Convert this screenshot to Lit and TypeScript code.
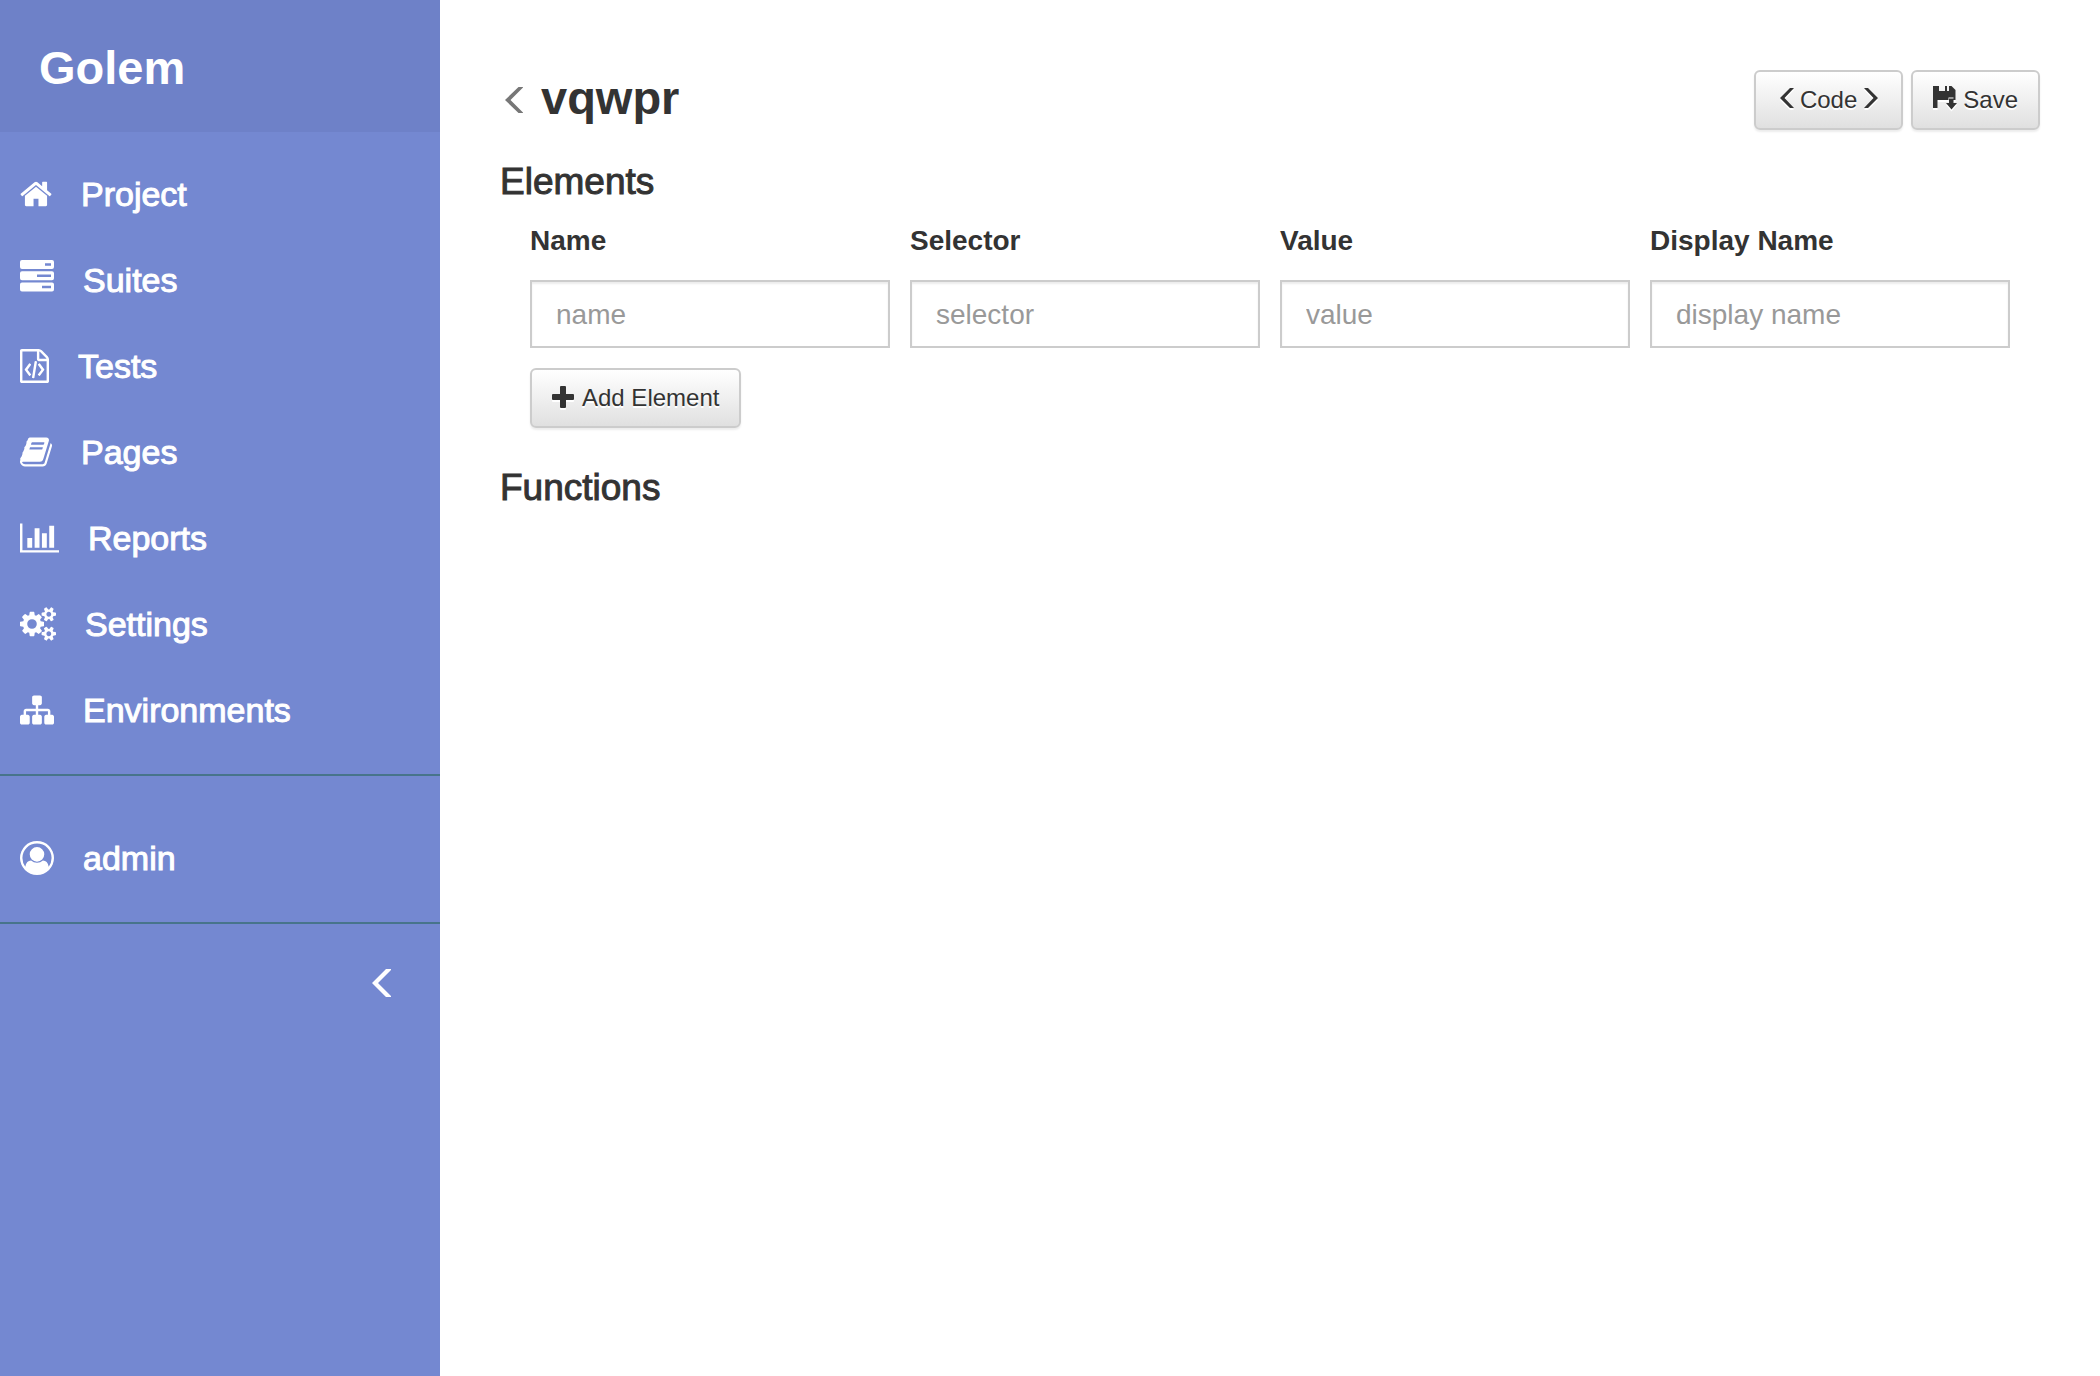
import { LitElement, css, html, svg, type SVGTemplateResult } from "lit";
import { customElement, property } from "lit/decorators.js";

interface Glyph {
  box: string;
  width: number;
  height: number;
  body: SVGTemplateResult;
}

const GLYPHS: Record<string, Glyph> = {
  home: {
    box: "64 0 1664 1792", width: 32, height: 34,
    body: svg`<path d="M1472 992v480q0 26-19 45t-45 19h-384v-384h-256v384h-384q-26 0-45-19t-19-45v-480q0-1 .5-3t.5-3l575-474 575 474q1 2 1 6zm223-69l-62 74q-8 9-21 11h-3q-13 0-21-7l-692-577-692 577q-12 8-24 7-13-2-21-11l-62-74q-8-10-7-23.5t11-21.5l719-599q32-26 76-26t76 26l244 204v-195q0-14 9-23t23-9h192q14 0 23 9t9 23v408l219 182q10 8 11 21.5t-7 23.5z"/>`,
  },
  tasks: {
    box: "0 0 34 42", width: 34, height: 42,
    body: svg`<path fill-rule="evenodd" d="M2 1h30a2 2 0 0 1 2 2v5a2 2 0 0 1-2 2h-30a2 2 0 0 1-2-2v-5a2 2 0 0 1 2-2zM25 4.200v2.600h6v-2.600zM2 12.200h30a2 2 0 0 1 2 2v5a2 2 0 0 1-2 2h-30a2 2 0 0 1-2-2v-5a2 2 0 0 1 2-2zM17 15.400v2.600h14v-2.600zM2 23.500h30a2 2 0 0 1 2 2v5a2 2 0 0 1-2 2h-30a2 2 0 0 1-2-2v-5a2 2 0 0 1 2-2zM22 26.700v2.600h9v-2.600z"/>`,
  },
  code: {
    box: "128 0 1536 1792", width: 29, height: 34,
    body: svg`<path d="M1596 380q28 28 48 76t20 88v1152q0 40-28 68t-68 28h-1344q-40 0-68-28t-28-68v-1600q0-40 28-68t68-28h896q40 0 88 20t76 48zm-444-244v376h376q-10-29-22-41l-313-313q-12-12-41-22zm384 1528v-1024h-416q-40 0-68-28t-28-68v-416h-768v1536h1280zm-928-896q8-11 21-12.500t24 6.500l51 38q11 8 12.500 21t-6.500 24l-182 243 182 243q8 11 6.500 24t-12.500 21l-51 38q-11 8-24 6.500t-21-12.500l-226-301q-14-19 0-38zm802 301q14 19 0 38l-226 301q-8 11-21 12.500t-24-6.500l-51-38q-11-8-12.500-21t6.500-24l182-243-182-243q-8-11-6.500-24t12.500-21l51-38q11-8 24-6.500t21 12.500zm-620 461q-13-2-20.500-13t-5.500-24l138-831q2-13 13-20.500t24-5.500l63 10q13 2 20.500 13t5.500 24l-138 831q-2 13-13 20.500t-24 5.500z"/>`,
  },
  book: {
    box: "64 0 1664 1792", width: 32, height: 34,
    body: svg`<path d="M1703 478q40 57 18 129l-275 906q-19 64-76.500 107.500t-122.500 43.500h-923q-77 0-148.500-53.500t-99.500-131.500q-24-67-2-127 0-4 3-27t4-37q1-8-3-21.500t-3-19.500q2-11 8-21t16.500-23.500 16.500-23.500q23-38 45-91.500t30-91.500q3-10 .5-30t-.5-28q3-11 17-28t17-23q21-36 42-92t25-90q1-9-2.500-32t.5-28q4-13 22-30.500t22-22.500q19-26 42.500-84.500t27.500-96.500q1-8-3-25.500t-2-26.500q2-8 9-18t18-23 17-21q8-12 16.500-30.500t15-35 16-36 19.500-32 26.500-23.500 36-11.500 47.500 5.500l-1 3q38-9 51-9h761q74 0 114 56t18 130l-274 906q-36 119-71.500 153.500t-128.500 34.500h-869q-27 0-38 15-11 16-1 43 24 70 144 70h923q29 0 56-15.500t35-41.500l300-987q7-22 5-57 38 15 59 43zm-1064 2q-4 13 2 22.500t20 9.500h608q13 0 25.500-9.500t16.500-22.500l21-64q4-13-2-22.500t-20-9.500h-608q-13 0-25.500 9.500t-16.500 22.500zm-83 256q-4 13 2 22.500t20 9.500h608q13 0 25.500-9.500t16.500-22.500l21-64q4-13-2-22.500t-20-9.500h-608q-13 0-25.500 9.500t-16.500 22.500z"/>`,
  },
  chart: {
    box: "0 0 2048 1792", width: 39, height: 34,
    body: svg`<path d="M640 896v512h-256v-512h256zm384-512v1024h-256v-1024h256zm1024 1152v128h-2048v-1536h128v1408h1920zm-640-896v768h-256v-768h256zm384-384v1152h-256v-1152h256z"/>`,
  },
  cogs: {
    box: "0 0 1920 1792", width: 36, height: 34,
    body: svg`<path d="M896 896q0-106-75-181t-181-75-181 75-75 181 75 181 181 75 181-75 75-181zm768 512q0-52-38-90t-90-38-90 38-38 90q0 53 37.500 90.500t90.500 37.500 90.500-37.500 37.500-90.500zm0-1024q0-52-38-90t-90-38-90 38-38 90q0 53 37.500 90.500t90.500 37.500 90.500-37.500 37.500-90.500zm-384 421v185q0 10-7 19.500t-16 10.500l-155 24q-11 35-32 76 34 48 90 115 7 11 7 20 0 12-7 19-23 30-82.500 89.500t-78.500 59.500q-11 0-21-7l-115-90q-37 19-77 31-11 108-23 155-7 24-30 24h-186q-11 0-20-7.500t-10-17.500l-23-153q-34-10-75-31l-118 89q-7 7-20 7-11 0-21-8-144-133-144-160 0-9 7-19 10-14 41-53t47-61q-23-44-35-82l-152-24q-10-1-17-9.500t-7-19.500v-185q0-10 7-19.500t16-10.500l155-24q11-35 32-76-34-48-90-115-7-11-7-20 0-12 7-20 22-30 82-89t79-59q11 0 21 7l115 90q34-18 77-32 11-108 23-154 7-24 30-24h186q11 0 20 7.500t10 17.500l23 153q34 10 75 31l118-89q8-7 20-7 11 0 21 8 144 133 144 160 0 8-7 19-12 16-42 54t-45 60q23 48 34 82l152 23q10 2 17 10.500t7 19.500zm640 533v140q0 16-149 31-12 27-30 52 51 113 51 138 0 4-4 7-122 71-124 71-8 0-46-47t-52-68q-20 2-30 2t-30-2q-14 21-52 68t-46 47q-2 0-124-71-4-3-4-7 0-25 51-138-18-25-30-52-149-15-149-31v-140q0-16 149-31 13-29 30-52-51-113-51-138 0-4 4-7 4-2 35-20t59-34 30-16q8 0 46 46.500t52 67.500q20-2 30-2t30 2q51-71 92-112l6-2q4 0 124 70 4 3 4 7 0 25-51 138 17 23 30 52 149 15 149 31zm0-1024v140q0 16-149 31-12 27-30 52 51 113 51 138 0 4-4 7-122 71-124 71-8 0-46-47t-52-68q-20 2-30 2t-30-2q-14 21-52 68t-46 47q-2 0-124-71-4-3-4-7 0-25 51-138-18-25-30-52-149-15-149-31v-140q0-16 149-31 13-29 30-52-51-113-51-138 0-4 4-7 4-2 35-20t59-34 30-16q8 0 46 46.500t52 67.500q20-2 30-2t30 2q51-71 92-112l6-2q4 0 124 70 4 3 4 7 0 25-51 138 17 23 30 52 149 15 149 31z"/>`,
  },
  sitemap: {
    box: "0 0 1792 1792", width: 34, height: 34,
    body: svg`<path d="M1792 1248v320q0 40-28 68t-68 28h-320q-40 0-68-28t-28-68v-320q0-40 28-68t68-28h96v-192h-512v192h96q40 0 68 28t28 68v320q0 40-28 68t-68 28h-320q-40 0-68-28t-28-68v-320q0-40 28-68t68-28h96v-192h-512v192h96q40 0 68 28t28 68v320q0 40-28 68t-68 28h-320q-40 0-68-28t-28-68v-320q0-40 28-68t68-28h96v-192q0-52 38-90t90-38h512v-192h-96q-40 0-68-28t-28-68v-320q0-40 28-68t68-28h320q40 0 68 28t28 68v320q0 40-28 68t-68 28h-96v192h512q52 0 90 38t38 90v192h96q40 0 68 28t28 68z"/>`,
  },
  user: {
    box: "0 0 1792 1792", width: 34, height: 34,
    body: svg`<path d="M896 0q182 0 348 71t286 191 191 286 71 348q0 181-70.500 347t-190.500 286-286 191.500-349 71.500-349-71-285.500-191.500-190.500-286-71-347.500 71-348 191-286 286-191 348-71zm619 1351q149-205 149-455 0-156-61-298t-164-245-245-164-298-61-298 61-245 164-164 245-61 298q0 250 149 455 66-327 306-327 131 128 313 128t313-128q240 0 306 327zm-235-647q0-159-112.500-271.500t-271.500-112.500-271.500 112.500-112.500 271.500 112.500 271.500 271.500 112.500 271.500-112.500 112.500-271.500z"/>`,
  },
  collapse: {
    box: "0 0 19 28", width: 19, height: 28,
    body: svg`<path d="M0 14L14 0h5v1L6 14l13 13v1h-5z"/>`,
  },
  back: {
    box: "0 0 18 26", width: 18, height: 26,
    body: svg`<path d="M0 13L13.500 0H18v.5L5.500 13 18 25.500v.5h-4.500z"/>`,
  },
  angleLeft: {
    box: "-4 0 16 24", width: 16, height: 24,
    body: svg`<path d="M0 10L10 0h4L4.500 10 14 20h-4z"/>`,
  },
  angleRight: {
    box: "1 0 16 24", width: 16, height: 24,
    body: svg`<path d="M14 10L4 0H0l9.500 10L0 20h4z"/>`,
  },
  save: {
    box: "0 0 22 28", width: 22, height: 28,
    body: svg`<path d="M0 0h6v5h6V0h2v5h2V0h2.500L22.500 4v10h-2v-2.500h-5V14H4.500v8H0zM16 12.500h4.500V17H24l-5.500 6.500L13 17h3z"/>`,
  },
  plus: {
    box: "0 0 22 24", width: 22, height: 24,
    body: svg`<path d="M9 0h4a1 1 0 0 1 1 1v7h7a1 1 0 0 1 1 1v4a1 1 0 0 1-1 1h-7v7a1 1 0 0 1-1 1H9a1 1 0 0 1-1-1v-7H1a1 1 0 0 1-1-1V9a1 1 0 0 1 1-1h7V1a1 1 0 0 1 1-1z"/>`,
  },
};

const glyph = (name: string) => {
  const g = GLYPHS[name];
  return html`<svg
    class="glyph"
    viewBox=${g.box}
    width=${g.width}
    height=${g.height}
    preserveAspectRatio="none"
    fill="currentColor"
    aria-hidden="true"
  >${g.body}</svg>`;
};

@customElement("side-nav")
class SideNav extends LitElement {
  static styles = css`
    :host {
      display: block;
      box-sizing: border-box;
      background: #7488d1;
      color: #fff;
      font-size: 34px;
    }
    .brand {
      display: flex;
      align-items: center;
      box-sizing: border-box;
      height: 132px;
      padding: 4px 39px 0;
      background: #6e81c8;
    }
    .brand-name {
      margin: 0;
      font-size: 47px;
      font-weight: 700;
      line-height: 52px;
    }
    .list {
      margin: 0;
      padding: 20px 0;
      list-style: none;
      border-bottom: 2px solid #47748b;
    }
    .account {
      padding-top: 40px;
    }
    .link {
      display: flex;
      align-items: center;
      gap: 29px;
      box-sizing: border-box;
      height: 86px;
      padding: 0 20px 2px;
      color: inherit;
      text-decoration: none;
      -webkit-text-stroke: 1px currentColor;
    }
    .link .glyph {
      flex: none;
    }
    .footer {
      display: flex;
      justify-content: flex-end;
      padding: 35px 39px;
    }
    .toggle {
      display: flex;
      padding: 10px;
      border: 0;
      background: none;
      color: inherit;
    }
  `;

  private links = [
    ["home", "Project"],
    ["tasks", "Suites"],
    ["code", "Tests"],
    ["book", "Pages"],
    ["chart", "Reports"],
    ["cogs", "Settings"],
    ["sitemap", "Environments"],
  ];

  private row(icon: string, label: string) {
    return html`<li><a class="link" href="#">${glyph(icon)}<span>${label}</span></a></li>`;
  }

  render() {
    return html`
      <header class="brand"><h2 class="brand-name">Golem</h2></header>
      <nav>
        <ul class="list">${this.links.map(([icon, label]) => this.row(icon, label))}</ul>
        <ul class="list account">${this.row("user", "admin")}</ul>
      </nav>
      <div class="footer">
        <button class="toggle" type="button" aria-label="Collapse sidebar">${glyph("collapse")}</button>
      </div>
    `;
  }
}

@customElement("tool-button")
class ToolButton extends LitElement {
  @property() icon = "";
  @property() iconEnd = "";
  @property() label = "";

  static styles = css`
    :host {
      display: block;
    }
    .btn {
      display: flex;
      align-items: center;
      gap: 8px;
      box-sizing: border-box;
      height: 60px;
      padding: 0 20px;
      border: 2px solid #ccc;
      border-radius: 6px;
      background: linear-gradient(#fff, #e0e0e0);
      box-shadow: 0 2px 2px rgba(0, 0, 0, 0.075);
      color: #333;
      font: 24px/34px "Liberation Sans", Arial, sans-serif;
      text-shadow: 0 2px 0 #fff;
    }
    .glyph {
      flex: none;
      overflow: visible;
      filter: drop-shadow(0 2px 0 #fff);
    }
  `;

  render() {
    return html`<button class="btn" type="button">
      ${this.icon ? glyph(this.icon) : ""}<span>${this.label}</span>${this.iconEnd ? glyph(this.iconEnd) : ""}
    </button>`;
  }
}

@customElement("app-root")
class AppRoot extends LitElement {
  static styles = css`
    :host {
      display: grid;
      grid-template-columns: 440px minmax(0, 1fr);
      min-height: 100vh;
      background: #fff;
      color: #333;
      font-family: "Liberation Sans", Arial, sans-serif;
      font-size: 28px;
    }
    .main {
      padding: 70px 60px;
    }
    .heading {
      display: flex;
      align-items: center;
      justify-content: space-between;
      height: 60px;
    }
    .title {
      display: flex;
      align-items: center;
      gap: 18px;
      margin: 0;
      padding-left: 5px;
      font-size: 47px;
      font-weight: 700;
      line-height: 56px;
    }
    .title-text {
      padding-bottom: 4px;
    }
    .back {
      display: flex;
      color: #777;
    }
    .actions {
      display: flex;
      gap: 8px;
    }
    .section {
      margin: 31px 0 0;
      font-size: 37px;
      font-weight: 400;
      line-height: 42px;
      -webkit-text-stroke: 1px currentColor;
    }
    .elements {
      display: flex;
      flex-direction: column;
      gap: 20px;
      align-items: flex-start;
      padding: 18px 30px 8px;
    }
    .fields {
      display: grid;
      grid-template-columns: 36fr 35fr 35fr 36fr;
      gap: 20px;
      width: 100%;
    }
    .field {
      display: flex;
      flex-direction: column;
      gap: 19px;
      font-weight: 700;
      line-height: 40px;
    }
    .input {
      box-sizing: border-box;
      width: 100%;
      height: 68px;
      padding: 2px 24px 0;
      border: 2px solid #ccc;
      border-radius: 0;
      background: #fff;
      box-shadow: inset 0 2px 2px rgba(0, 0, 0, 0.075);
      color: #555;
      font: 28px/40px "Liberation Sans", Arial, sans-serif;
    }
    .input::placeholder {
      color: #999;
      opacity: 1;
    }
  `;

  private fields = ["Name", "Selector", "Value", "Display Name"];

  render() {
    return html`
      <side-nav></side-nav>
      <main class="main">
        <div class="heading">
          <h1 class="title">
            <a class="back" href="#" aria-label="Back">${glyph("back")}</a>
            <span class="title-text">vqwpr</span>
          </h1>
          <div class="actions">
            <tool-button icon="angleLeft" .iconEnd=${"angleRight"} label="Code"></tool-button>
            <tool-button icon="save" label="Save"></tool-button>
          </div>
        </div>
        <h2 class="section">Elements</h2>
        <div class="elements">
          <div class="fields">
            ${this.fields.map(
              (name) => html`<label class="field">
                <span>${name}</span>
                <input class="input" type="text" placeholder=${name.toLowerCase()} />
              </label>`
            )}
          </div>
          <tool-button icon="plus" label="Add Element"></tool-button>
        </div>
        <h2 class="section">Functions</h2>
      </main>
    `;
  }
}
